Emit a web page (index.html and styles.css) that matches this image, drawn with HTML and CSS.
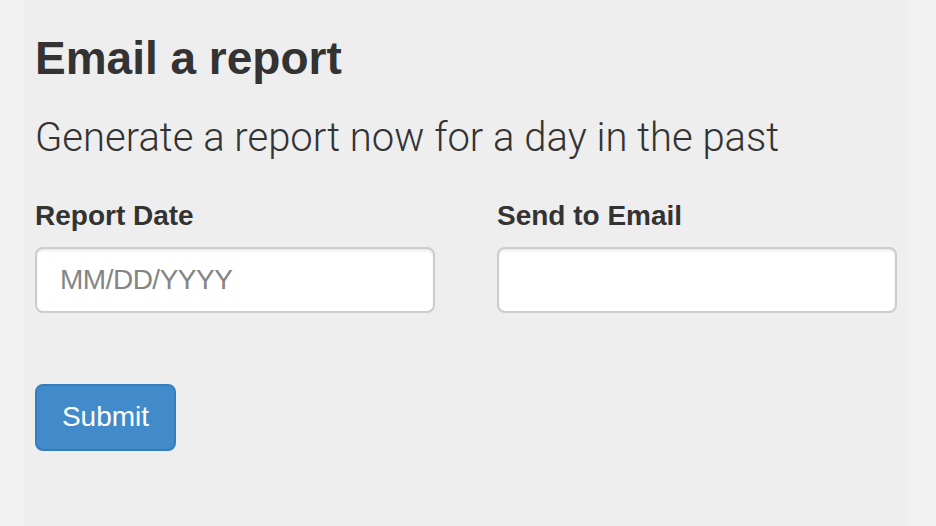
FILE: index.html
```html
<!DOCTYPE html>
<html lang="en">
<head>
<meta charset="UTF-8">
<meta name="viewport" content="width=device-width, initial-scale=1.0">
<title>Email a report</title>
<link rel="stylesheet" href="styles.css">
</head>
<body>
<div class="panel">

  <h3 class="title">Email a report</h3>
  <p class="lead">Generate a report now for a day in the past</p>

  <form class="report-form">
    <div class="row">
      <div class="form-group">
        <label for="report-date">Report Date</label>
        <input class="form-control" id="report-date" type="text" placeholder="MM/DD/YYYY">
      </div>
      <div class="form-group">
        <label for="send-email">Send to Email</label>
        <input class="form-control" id="send-email" type="email">
      </div>
    </div>
    <button class="btn btn-primary" type="button">Submit</button>
  </form>

</div>
</body>
</html>
```

FILE: styles.css
```css
:root {
  --bg: #f2f2f2;
  --panel: #eeeeee;
  --text: #333333;
  --border: #cccccc;
  --muted: #858585;
  --primary: #428bca;
  --primary-border: #357ebd;
}

* { margin: 0; padding: 0; box-sizing: border-box; }

body {
  background: var(--bg);
  color: var(--text);
  font-family: 'Liberation Sans', Arial, sans-serif;
  min-height: 100vh;
}

.panel {
  width: 884px;
  min-height: 100vh;
  margin-left: 24px;
  padding: 33px 11px 0;
  background: var(--panel);
}

/* Heading */
.title {
  font-size: 46px;
  font-weight: 700;
  line-height: 1.1;
  margin-bottom: 26px;
}

.lead {
  font-family: 'Roboto', 'Liberation Sans', sans-serif;
  font-size: 40px;
  font-weight: 300;
  line-height: 1.4;
  margin-bottom: 30px;
}

/* Form */
.row {
  display: grid;
  grid-template-columns: 400px 400px;
  gap: 62px;
  margin-bottom: 71px;
}

.form-group label {
  display: block;
  font-size: 28px;
  font-weight: 700;
  line-height: 40px;
  margin-bottom: 11px;
}

.form-control {
  display: block;
  width: 100%;
  height: 66px;
  padding: 0 23px;
  font-family: inherit;
  font-size: 28px;
  color: #555;
  background: #fff;
  border: 2px solid var(--border);
  border-radius: 8px;
  box-shadow: inset 0 2px 2px rgba(0,0,0,0.075);
  outline: none;
}
.form-control::placeholder {
  color: var(--muted);
  letter-spacing: -0.5px;
}

.btn {
  display: inline-block;
  height: 67px;
  padding: 0 24px;
  font-family: inherit;
  font-size: 28px;
  color: #fff;
  border-radius: 8px;
  cursor: pointer;
}

.btn-primary {
  width: 141px;
  background: var(--primary);
  border: 2px solid var(--primary-border);
}
```
